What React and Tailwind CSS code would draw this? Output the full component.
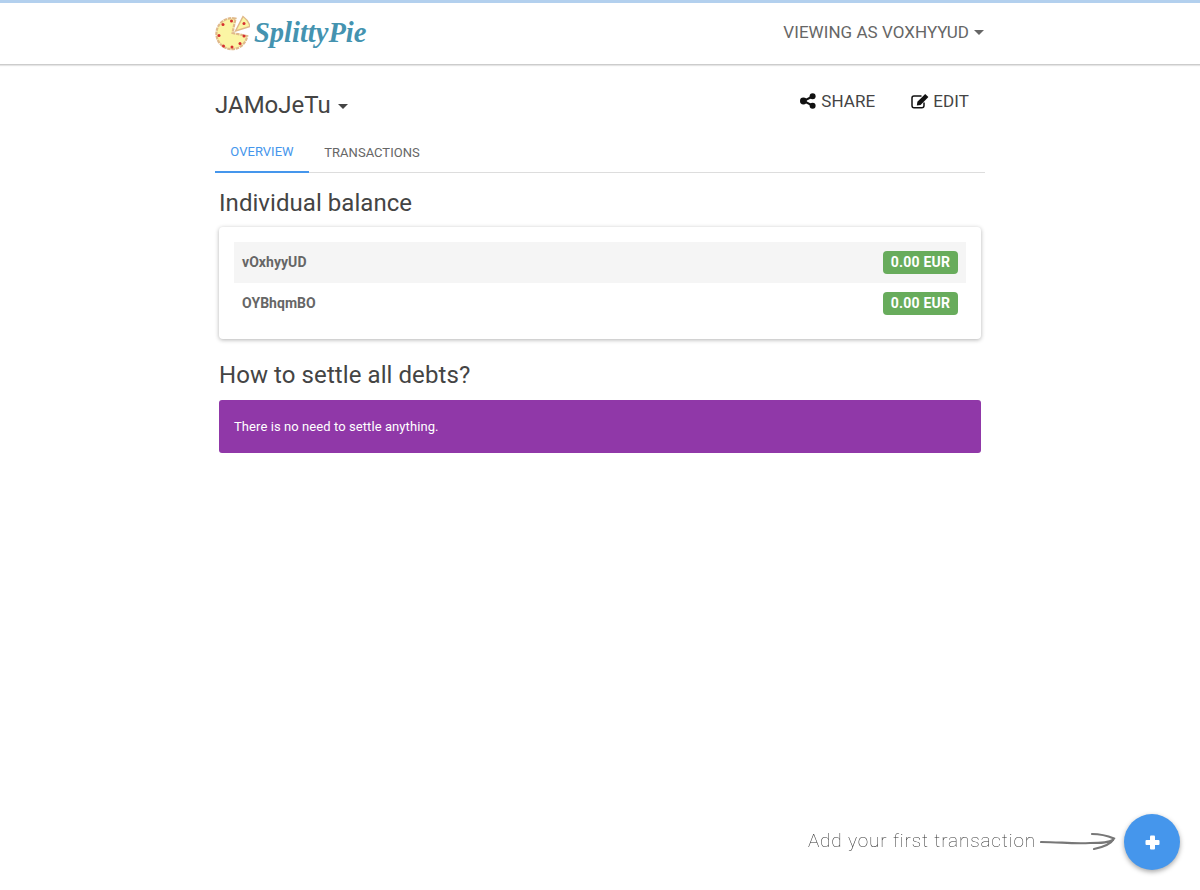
const people = [
  { name: 'vOxhyyUD', amount: '0.00 EUR', striped: true },
  { name: 'OYBhqmBO', amount: '0.00 EUR' },
]

function Caret({ className }) {
  return <span className={`inline-block w-0 h-0 border-x-[5px] border-x-transparent border-t-[5px] ${className}`} />
}

function PizzaLogo() {
  return (
    <svg width="36" height="36" viewBox="0 0 36 36">
      <path d="M21.5 3.6 A15.5 15.5 0 1 0 33.2 21 L18.5 18 Z" fill="#fbf5a4" stroke="#e0b98a" strokeWidth="2.2" strokeDasharray="3.5 0.8" />
      <path d="M21.5 16 L29 1.5 C32.5 4 35 7.5 36 11.5 Z" fill="#fbf5a4" stroke="#e0b98a" strokeWidth="1.5" />
      <circle cx="30" cy="8.5" r="1.5" fill="#d62f2f" />
      <circle cx="17.5" cy="6" r="1.5" fill="#d62f2f" />
      <circle cx="9" cy="9.5" r="1.5" fill="#d62f2f" />
      <circle cx="5" cy="20.5" r="1.5" fill="#d62f2f" />
      <circle cx="9.5" cy="31" r="1.5" fill="#d62f2f" />
      <circle cx="18" cy="32" r="1.5" fill="#d62f2f" />
      <circle cx="26" cy="28.5" r="1.5" fill="#d62f2f" />
      <circle cx="30" cy="21" r="1.5" fill="#d62f2f" />
    </svg>
  )
}

function ShareIcon() {
  return (
    <svg width="16" height="16" viewBox="0 0 16 16" fill="#111">
      <path d="M12.5 3.5 L3.5 8 L12.5 12.5" fill="none" stroke="#111" strokeWidth="2" />
      <circle cx="12.6" cy="3.3" r="3" />
      <circle cx="3.4" cy="8" r="3.4" />
      <circle cx="12.6" cy="12.7" r="3" />
    </svg>
  )
}

function EditIcon() {
  return (
    <svg width="18" height="16" viewBox="0 0 18 16" fill="none">
      <path d="M13 9.5 V12.5 C13 14 12 14.8 10.8 14.8 H3 C1.8 14.8 1 14 1 12.5 V5 C1 3.8 1.8 2.9 3 2.9 H10.5" stroke="#111" strokeWidth="1.5" />
      <path d="M14.2 1 L17.4 4.1 L9.6 11.9 L5.8 12.6 L6.4 8.8 Z" fill="#111" />
    </svg>
  )
}

function PlusIcon() {
  return (
    <svg width="15" height="15" viewBox="0 0 15 15" fill="#fff">
      <rect x="5" y="0.5" width="5" height="14" rx="1" />
      <rect x="0.5" y="5" width="14" height="5" rx="1" />
    </svg>
  )
}

function Arrow() {
  return (
    <svg width="76" height="22" viewBox="0 0 76 22" fill="none" stroke="#777" strokeWidth="2.2" strokeLinecap="round">
      <path d="M1 11 C20 11 32 13 50 12 C60 12 68 12 73 9" />
      <path d="M52 3 C60 3 68 5 74 7.5 C71 13 64 16 54 18" />
    </svg>
  )
}

export default function App() {
  return (
    <div className="min-h-[890px] bg-white font-['Roboto',sans-serif] text-[#333]">
      <header className="h-[65px] border-t-[3px] border-t-[#b3d0ee] border-b border-b-[#cccccc] shadow-[0_1px_1px_rgba(0,0,0,0.1)] bg-white">
        <div className="mx-auto w-[770px] h-full flex items-center justify-between">
          <div className="flex items-center gap-[4px] -mt-[2px] -ml-[1px]">
            <PizzaLogo />
            <span className="font-['Liberation_Serif',serif] italic font-bold text-[28.5px] leading-none text-[#4493b0] mt-[2px]">SplittyPie</span>
          </div>
          <div className="flex items-center gap-[5px] text-[17px] text-[#666] -mt-[2px] pr-[1px] tracking-[0.04px]">
            VIEWING AS VOXHYYUD
            <Caret className="border-t-[#666]" />
          </div>
        </div>
      </header>

      <main className="mx-auto w-[770px]">
        <div className="flex items-start justify-between pt-[22px] h-[63px]">
          <div className="flex items-center gap-[7px] text-[24px] leading-[36px] text-[#444]">
            JAMoJeTu
            <Caret className="border-t-[#444] mt-[2px]" />
          </div>
          <div className="flex items-center text-[17px] leading-[30px] text-[#444] pr-[16px] -mt-[1px] tracking-[0.08px]">
            <span className="flex items-center gap-[5px] mr-[35px] -translate-x-[1px]"><ShareIcon />SHARE</span>
            <span className="flex items-center gap-[4px]"><EditIcon />EDIT</span>
          </div>
        </div>

        <nav className="flex h-[45px] border-b border-[#ddd] text-[13px] tracking-[0.03px]">
          <span className="h-[45px] w-[94px] pt-[4px] flex items-center justify-center border-b-2 border-[#4596ec] text-[#4596ec]">OVERVIEW</span>
          <span className="h-[45px] w-[126px] pt-[4px] flex items-center justify-center text-[#666]">TRANSACTIONS</span>
        </nav>

        <section className="px-1">
          <h2 className="text-[24px] leading-[30px] mt-[15px] mb-[9px] text-[#444] tracking-[0.05px]">Individual balance</h2>
          <div className="rounded-[4px] bg-white shadow-[0_1px_4px_rgba(0,0,0,0.3)] p-[15px]">
            {people.map((p) => (
              <div key={p.name} className={`h-[41px] flex items-center justify-between px-2 ${p.striped ? 'bg-[#f5f5f5]' : ''}`}>
                <span className="text-[14px] font-bold text-[#666] tracking-[0.05px]">{p.name}</span>
                <span className="w-[75px] h-[23px] flex items-center justify-center rounded-[4px] bg-[#68ac5c] text-white text-[14px] font-bold tracking-[0.2px]">{p.amount}</span>
              </div>
            ))}
          </div>

          <h2 className="text-[24px] leading-[30px] mt-[21px] mb-[10px] text-[#444] tracking-[0.08px]">How to settle all debts?</h2>
          <div className="h-[53px] flex items-center px-[15px] rounded-[3px] bg-[#9038a8] text-white text-[13px] tracking-[0.08px]">
            There is no need to settle anything.
          </div>
        </section>
      </main>

      <div className="fixed right-5 bottom-5 flex items-center gap-[8px]">
        <div className="flex items-center gap-[4px]">
          <span className="font-['Roboto',sans-serif] font-thin text-[19px] tracking-[0.85px] text-[#333] -mt-[2px]">Add your first transaction</span>
          <Arrow />
        </div>
        <button className="w-14 h-14 rounded-full bg-[#4596ec] flex items-center justify-center shadow-[0_2px_5px_rgba(0,0,0,0.35)]">
          <PlusIcon />
        </button>
      </div>
    </div>
  )
}
